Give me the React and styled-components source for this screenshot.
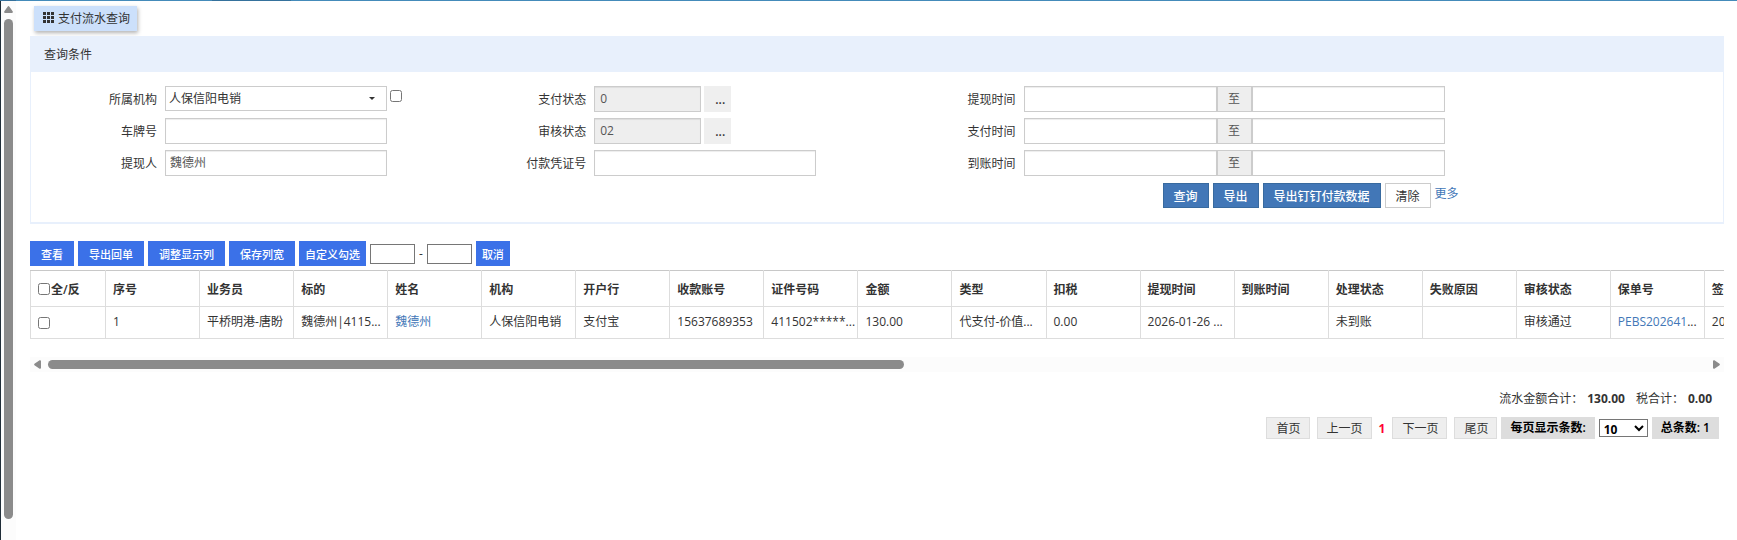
import { useState } from "react";
import styled, { createGlobalStyle } from "styled-components";

const columns = [
    { key: 'index', title: '序号' },
    { key: 'agent', title: '业务员' },
    { key: 'target', title: '标的' },
    { key: 'name', title: '姓名', link: true },
    { key: 'org', title: '机构' },
    { key: 'bank', title: '开户行' },
    { key: 'account', title: '收款账号' },
    { key: 'idNo', title: '证件号码' },
    { key: 'amount', title: '金额' },
    { key: 'type', title: '类型' },
    { key: 'tax', title: '扣税' },
    { key: 'withdrawTime', title: '提现时间' },
    { key: 'arriveTime', title: '到账时间' },
    { key: 'status', title: '处理状态' },
    { key: 'reason', title: '失败原因' },
    { key: 'audit', title: '审核状态' },
    { key: 'policyNo', title: '保单号', link: true, more: true },
    { key: 'signDate', title: '签单' },
]

// long values are already shortened for the list
const rows = [
    {
        index: '1',
        agent: '平桥明港-唐盼',
        target: '魏德州|4115...',
        name: '魏德州',
        org: '人保信阳电销',
        bank: '支付宝',
        account: '15637689353',
        idNo: '411502*****...',
        amount: '130.00',
        type: '代支付-价值...',
        tax: '0.00',
        withdrawTime: '2026-01-26 ...',
        arriveTime: '',
        status: '未到账',
        reason: '',
        audit: '审核通过',
        policyNo: 'PEBS202641',
        signDate: '2026',
    },
]

const dateRanges = [
    { id: 'withdraw', label: '提现时间' },
    { id: 'pay', label: '支付时间' },
    { id: 'arrive', label: '到账时间' },
]

function DateRange({ id, label }) {
    return (
        <Field>
            <Label htmlFor={id}>{label}</Label>
            <RangeGroup>
                <Input id={id} $width="193px" />
                <Addon>至</Addon>
                <Input aria-label={`${label}至`} $width="193px" />
            </RangeGroup>
        </Field>
    )
}

function PickerField({ id, label, value }) {
    return (
        <Field>
            <Label htmlFor={id}>{label}</Label>
            <Input id={id} $width="107px" defaultValue={value} readOnly />
            <PickButton type="button" aria-label={`选择${label}`}>...</PickButton>
        </Field>
    )
}

function App() {
    const [checked, setChecked] = useState(false)

    return (
        <>
        <GlobalStyle />
        <TopStrip />
        <Page>
            <SideScroll>
                <svg width="9" height="7" viewBox="0 0 9 7"><path d="M3.6 0.8 Q4.5 -0.6 5.4 0.8 L8.8 5.6 Q9 7 8 7 H1 Q0 7 0.2 5.6 Z" fill="#8b8b8b" /></svg>
                <SideThumb />
            </SideScroll>
            <Content>
                <Tab type="button">
                    <svg width="11" height="11" viewBox="0 0 11 11" fill="#333">
                        {[0, 4, 8].map((y) => [0, 4, 8].map((x) => (
                            <rect key={`${x}-${y}`} x={x} y={y} width="3" height="3" />
                        )))}
                    </svg>
                    支付流水查询
                </Tab>

                <Panel>
                    <PanelTitle>查询条件</PanelTitle>
                    <SearchForm onSubmit={(e) => e.preventDefault()}>
                        <FieldColumn>
                            <Field>
                                <Label htmlFor="org">所属机构</Label>
                                <OrgSelect id="org">
                                    <option>人保信阳电销</option>
                                </OrgSelect>
                                <FieldCheck aria-label="包含下级机构" />
                            </Field>
                            <Field>
                                <Label htmlFor="plate">车牌号</Label>
                                <Input id="plate" $width="222px" />
                            </Field>
                            <Field>
                                <Label htmlFor="person">提现人</Label>
                                <Input id="person" $width="222px" defaultValue="魏德州" />
                            </Field>
                        </FieldColumn>
                        <FieldColumn>
                            <PickerField id="payStatus" label="支付状态" value="0" />
                            <PickerField id="auditStatus" label="审核状态" value="02" />
                            <Field>
                                <Label htmlFor="voucher">付款凭证号</Label>
                                <Input id="voucher" $width="222px" />
                            </Field>
                        </FieldColumn>
                        <FieldColumn>
                            {dateRanges.map((range) => (
                                <DateRange key={range.id} {...range} />
                            ))}
                            <Actions>
                                <FormButton $primary>查询</FormButton>
                                <FormButton type="button" $primary>导出</FormButton>
                                <FormButton type="button" $primary>导出钉钉付款数据</FormButton>
                                <FormButton type="reset">清除</FormButton>
                                <Link href="#more">更多</Link>
                            </Actions>
                        </FieldColumn>
                    </SearchForm>
                </Panel>

                <Toolbar>
                    <ToolButton type="button">查看</ToolButton>
                    <ToolButton type="button">导出回单</ToolButton>
                    <ToolButton type="button">调整显示列</ToolButton>
                    <ToolButton type="button">保存列宽</ToolButton>
                    <ToolButton type="button" $tight>自定义勾选</ToolButton>
                    <PickRange>
                        <SmallInput aria-label="起始序号" />
                        <span>-</span>
                        <SmallInput aria-label="结束序号" />
                    </PickRange>
                    <ToolButton type="button" $tight>取消</ToolButton>
                </Toolbar>

                <TableWrapper>
                    <Table>
                        <colgroup>
                            <col width="75" />
                            {columns.map((col) => <col key={col.key} width="94" />)}
                        </colgroup>
                        <thead>
                            <tr>
                                <th>
                                    <CheckLabel>
                                        <Check checked={checked} onChange={() => setChecked(!checked)} />全/反
                                    </CheckLabel>
                                </th>
                                {columns.map((col) => <th key={col.key}>{col.title}</th>)}
                            </tr>
                        </thead>
                        <tbody>
                            {rows.map((row) => (
                                <tr key={row.index}>
                                    <td><CheckLabel><Check key={String(checked)} defaultChecked={checked} aria-label="选择" /></CheckLabel></td>
                                    {columns.map((col) => (
                                        <td key={col.key}>
                                            {col.link ? <CellLink href="#detail">{row[col.key]}</CellLink> : row[col.key]}
                                            {col.more && '...'}
                                        </td>
                                    ))}
                                </tr>
                            ))}
                        </tbody>
                    </Table>
                </TableWrapper>
                <BottomScroll>
                    <svg width="7" height="9" viewBox="0 0 7 9"><path d="M0.8 5.4 Q-0.6 4.5 0.8 3.6 L5.6 0.2 Q7 0 7 1 V8 Q7 9 5.6 8.8 Z" fill="#8b8b8b" /></svg>
                    <BottomTrack><BottomThumb /></BottomTrack>
                    <svg width="7" height="9" viewBox="0 0 7 9"><path d="M6.2 5.4 Q7.6 4.5 6.2 3.6 L1.4 0.2 Q0 0 0 1 V8 Q0 9 1.4 8.8 Z" fill="#8b8b8b" /></svg>
                </BottomScroll>

                <Totals>
                    <span>流水金额合计：</span>
                    <b>130.00</b>
                    <span>税合计：</span>
                    <b>0.00</b>
                </Totals>
                <Pager>
                    <PageGroup>
                        <PageButton type="button">首页</PageButton>
                        <PageButton type="button">上一页</PageButton>
                        <Current>1</Current>
                        <PageButton type="button">下一页</PageButton>
                        <PageButton type="button">尾页</PageButton>
                    </PageGroup>
                    <PagerTag as="label" htmlFor="pageSize">每页显示条数:</PagerTag>
                    <SizeSelect id="pageSize">
                        <option>10</option>
                        <option>20</option>
                        <option>50</option>
                    </SizeSelect>
                    <PagerTag>总条数: 1</PagerTag>
                </Pager>
            </Content>
        </Page>
        </>
    )
}

const GlobalStyle = createGlobalStyle`
    *{
        box-sizing:border-box;
    }
    body{
        margin:0;
        background:#fff;
    }
    #root{
        display:flex;
        flex-direction:column;
        height:100vh;
    }
    body, button, input, select{
        font-family:"Open Sans","Noto Sans CJK SC",sans-serif;
        font-size:12px;
        color:#333;
    }
    svg{
        display:block;
        flex:none;
    }
`;

const TopStrip = styled.div`
    flex:none;
    height:1px;
    background:linear-gradient(90deg, #35719c 16px, #448bba 16px 212px, #35719c 212px 291px, #448bba 291px);
`;

const Page = styled.div`
    display:flex;
    flex:1;
    min-height:0;
    overflow:hidden;
    border-left:1px solid #1f2d38;
`;

const SideScroll = styled.div`
    flex:none;
    display:flex;
    flex-direction:column;
    align-items:center;
    gap:6px;
    width:15px;
    padding:5px 0 21px;
    background:#fcfcfc;
`;

const SideThumb = styled.div`
    flex:1;
    width:9px;
    border-radius:5px;
    background:#8b8b8b;
`;

const Content = styled.main`
    flex:1;
    min-width:0;
    padding:5px 13px 0 14px;
`;

const Tab = styled.button`
    display:flex;
    align-items:center;
    gap:4px;
    height:25px;
    margin:0 0 5px 4px;
    padding:0 7px 2px 9px;
    border:none;
    background:#cce0fb;
    box-shadow:1px 2px 4px rgba(0, 0, 0, 0.3);
`;

const Panel = styled.section`
    overflow:hidden;
    border:1px solid #e8f0fc;
    border-bottom-width:2px;
`;

const PanelTitle = styled.h2`
    margin:0;
    padding:0 13px;
    font-size:12px;
    font-weight:400;
    line-height:35px;
    background:#e8f0fc;
`;

const SearchForm = styled.form`
    display:grid;
    grid-template-columns:1fr 1fr 2fr;
    margin:0 -16px 0 -9px;
    padding:14px 0;
`;

const FieldColumn = styled.div`
    display:flex;
    flex-direction:column;
    gap:4px;
`;

const Field = styled.div`
    display:flex;
    align-items:flex-start;
    gap:3px;
`;

const Label = styled.label`
    width:140px;
    padding-right:5px;
    line-height:28px;
    text-align:right;
`;

const Input = styled.input`
    width:${(props) => props.$width};
    height:26px;
    padding:0 4px 2px;
    border:1px solid #ccc;
    border-radius:0;
    color:#555;
    background:#fff;
    box-shadow:inset 0 1px 1px rgba(0, 0, 0, 0.075);
    outline:none;
    &:read-only{
        padding:0 5px 2px;
        background:#eee;
    }
`;

const OrgSelect = styled.select`
    width:222px;
    height:25px;
    padding:0 3px;
    border:1px solid #ccc;
    border-radius:0;
    appearance:none;
    background:#fff url("data:image/svg+xml,%3Csvg xmlns='http://www.w3.org/2000/svg' width='6' height='3'%3E%3Cpath d='M0 0h6L3 3z' fill='%23333'/%3E%3C/svg%3E") no-repeat right 11px center;
`;

const Check = styled.input.attrs({ type: 'checkbox' })`
    flex:none;
    width:12px;
    height:12px;
    margin:0;
`;

const FieldCheck = styled(Check)`
    margin-top:4px;
`;

const PickButton = styled.button`
    width:27px;
    height:26px;
    padding:0 0 0 5px;
    border:none;
    font-weight:600;
    background:#efefef;
`;

const RangeGroup = styled.div`
    display:flex;
`;

const Addon = styled.span`
    width:35px;
    border:1px solid #ccc;
    line-height:23px;
    text-align:center;
    color:#555;
    background:#eee;
`;

const Actions = styled.div`
    display:flex;
    gap:4px;
    padding:1px 0 0 282px;
`;

const FormButton = styled.button`
    height:25px;
    padding:0 10px;
    border:1px solid ${(props) => (props.$primary ? '#386a9f' : '#ccc')};
    font-weight:${(props) => (props.$primary ? 500 : 400)};
    color:${(props) => (props.$primary ? '#fff' : '#333')};
    background:${(props) => (props.$primary ? '#4277b7' : '#fff')};
    cursor:pointer;
`;

const Link = styled.a`
    line-height:22px;
    color:#4277b7;
    text-decoration:none;
`;

const CellLink = styled(Link)`
    line-height:inherit;
`;

const Toolbar = styled.div`
    display:flex;
    align-items:center;
    gap:4px;
    margin:17px 0 4px;
`;

const ToolButton = styled.button`
    height:25px;
    padding:0 ${(props) => (props.$tight ? '6px' : '11px')};
    border:none;
    font-size:11px;
    font-weight:500;
    color:#fff;
    background:#3b71e8;
    cursor:pointer;
`;

const PickRange = styled.div`
    display:flex;
    align-items:center;
    gap:4px;
`;

const SmallInput = styled.input`
    width:45px;
    height:20px;
    padding:0 2px;
    border:1px solid #767676;
    background:#fff;
`;

const TableWrapper = styled.div`
    overflow:hidden;
`;

const Table = styled.table`
    width:1769px;
    table-layout:fixed;
    border-collapse:collapse;
    th, td{
        height:32px;
        padding:0 3px 3px 7px;
        border:1px solid #ddd;
        text-align:left;
        white-space:nowrap;
        overflow:hidden;
    }
    th{
        height:36px;
        padding-bottom:0;
        border-top-color:#c8c8c8;
        font-weight:600;
    }
    td:first-child{
        padding-bottom:0;
    }
`;

const CheckLabel = styled.label`
    display:flex;
    align-items:center;
    gap:1px;
`;

const BottomScroll = styled.div`
    display:flex;
    align-items:center;
    gap:7px;
    height:15px;
    margin-top:18px;
    padding:0 4px;
    background:#fcfcfc;
`;

const BottomTrack = styled.div`
    flex:1;
`;

const BottomThumb = styled.div`
    width:51.6%;
    height:9px;
    border-radius:5px;
    background:#8b8b8b;
`;

const Totals = styled.div`
    display:flex;
    justify-content:flex-end;
    margin:18px 12px 9px 0;
    line-height:18px;
    b{
        margin-right:11px;
        font-weight:700;
    }
    b:last-child{
        margin-right:0;
    }
    span{
        margin-right:4px;
    }
`;

const Pager = styled.div`
    display:flex;
    align-items:center;
    justify-content:flex-end;
    gap:4px;
    padding-right:5px;
`;

const PageGroup = styled.div`
    display:flex;
    align-items:center;
    gap:7px;
`;

const PageButton = styled.button`
    height:22px;
    padding:0 8px 0 9px;
    border:1px solid #ddd;
    background:#eee;
`;

const Current = styled.span`
    font-weight:700;
    color:#f03;
`;

const PagerTag = styled.span`
    padding:0 9px;
    font-weight:600;
    line-height:22px;
    color:#000;
    background:#ddd;
`;

const SizeSelect = styled.select`
    width:49px;
    height:18px;
    padding:0 0 2px;
    border:1px solid #767676;
    border-radius:0;
    font-weight:700;
    line-height:14px;
    color:#000;
    background:#fff;
`;

export default App
